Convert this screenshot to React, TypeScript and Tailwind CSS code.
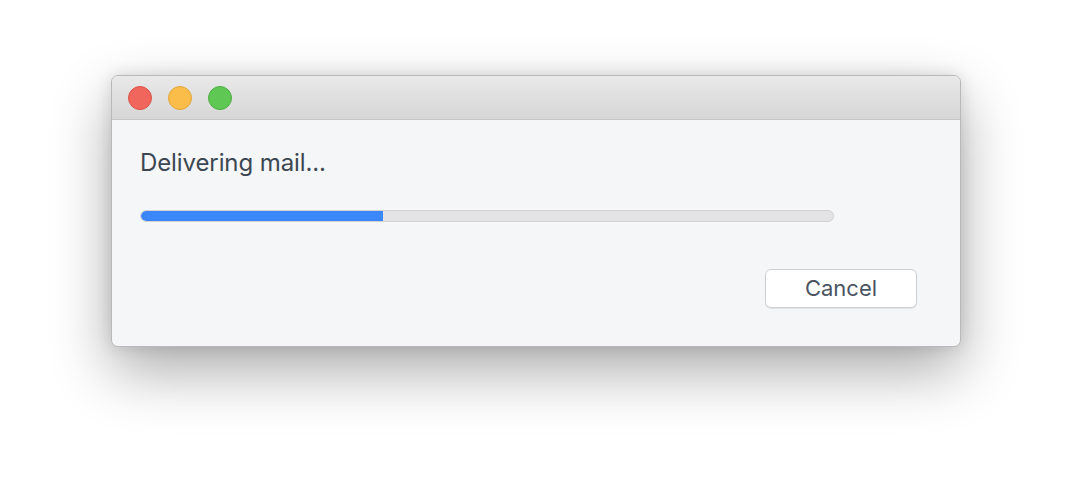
export default function App() {
  const progress = 242 / 693;

  return (
    <div className="w-[1072px] h-[494px] bg-white flex pl-[111px] pt-[75px] font-['Inter','Noto_Sans',sans-serif]">
      <div className="w-[850px] h-[272px] flex flex-col rounded-[7px] border border-[#b9b9bb] bg-[#f5f6f8] shadow-[0_24px_60px_rgba(0,0,0,0.33),0_0_16px_rgba(0,0,0,0.12)] overflow-hidden">
        <div className="h-[44px] shrink-0 flex items-center gap-[16px] pl-[16px] border-b border-[#c4c4c6] bg-gradient-to-b from-[#e9e9e9] to-[#d6d6d6]">
          <span className="w-[24px] h-[24px] rounded-full bg-[#f0665c] border border-[#dc5247]" />
          <span className="w-[24px] h-[24px] rounded-full bg-[#fbbd4a] border border-[#e3a63a]" />
          <span className="w-[24px] h-[24px] rounded-full bg-[#5fc854] border border-[#4cae42]" />
        </div>
        <div className="flex flex-col pl-[28px] pr-[43px]">
          <p className="mt-[28px] text-[24px] leading-[30px] text-[#3c4752] tracking-[-0.1px]">Delivering mail...</p>
          <div className="mt-[32px] w-[694px] h-[12px] rounded-full bg-[#e4e4e6] border border-[#d2d2d4] overflow-hidden">
            <div className="h-full bg-[#3b87f8] rounded-l-full" style={{ width: `${progress * 100}%` }} />
          </div>
          <div className="flex justify-end mt-[47px]">
            <button className="w-[152px] h-[39px] rounded-[6px] bg-white border border-[#cfd0d2] shadow-[0_1px_1px_rgba(0,0,0,0.08)] text-[22px] text-[#4a5462]">
              Cancel
            </button>
          </div>
        </div>
      </div>
    </div>
  );
}
